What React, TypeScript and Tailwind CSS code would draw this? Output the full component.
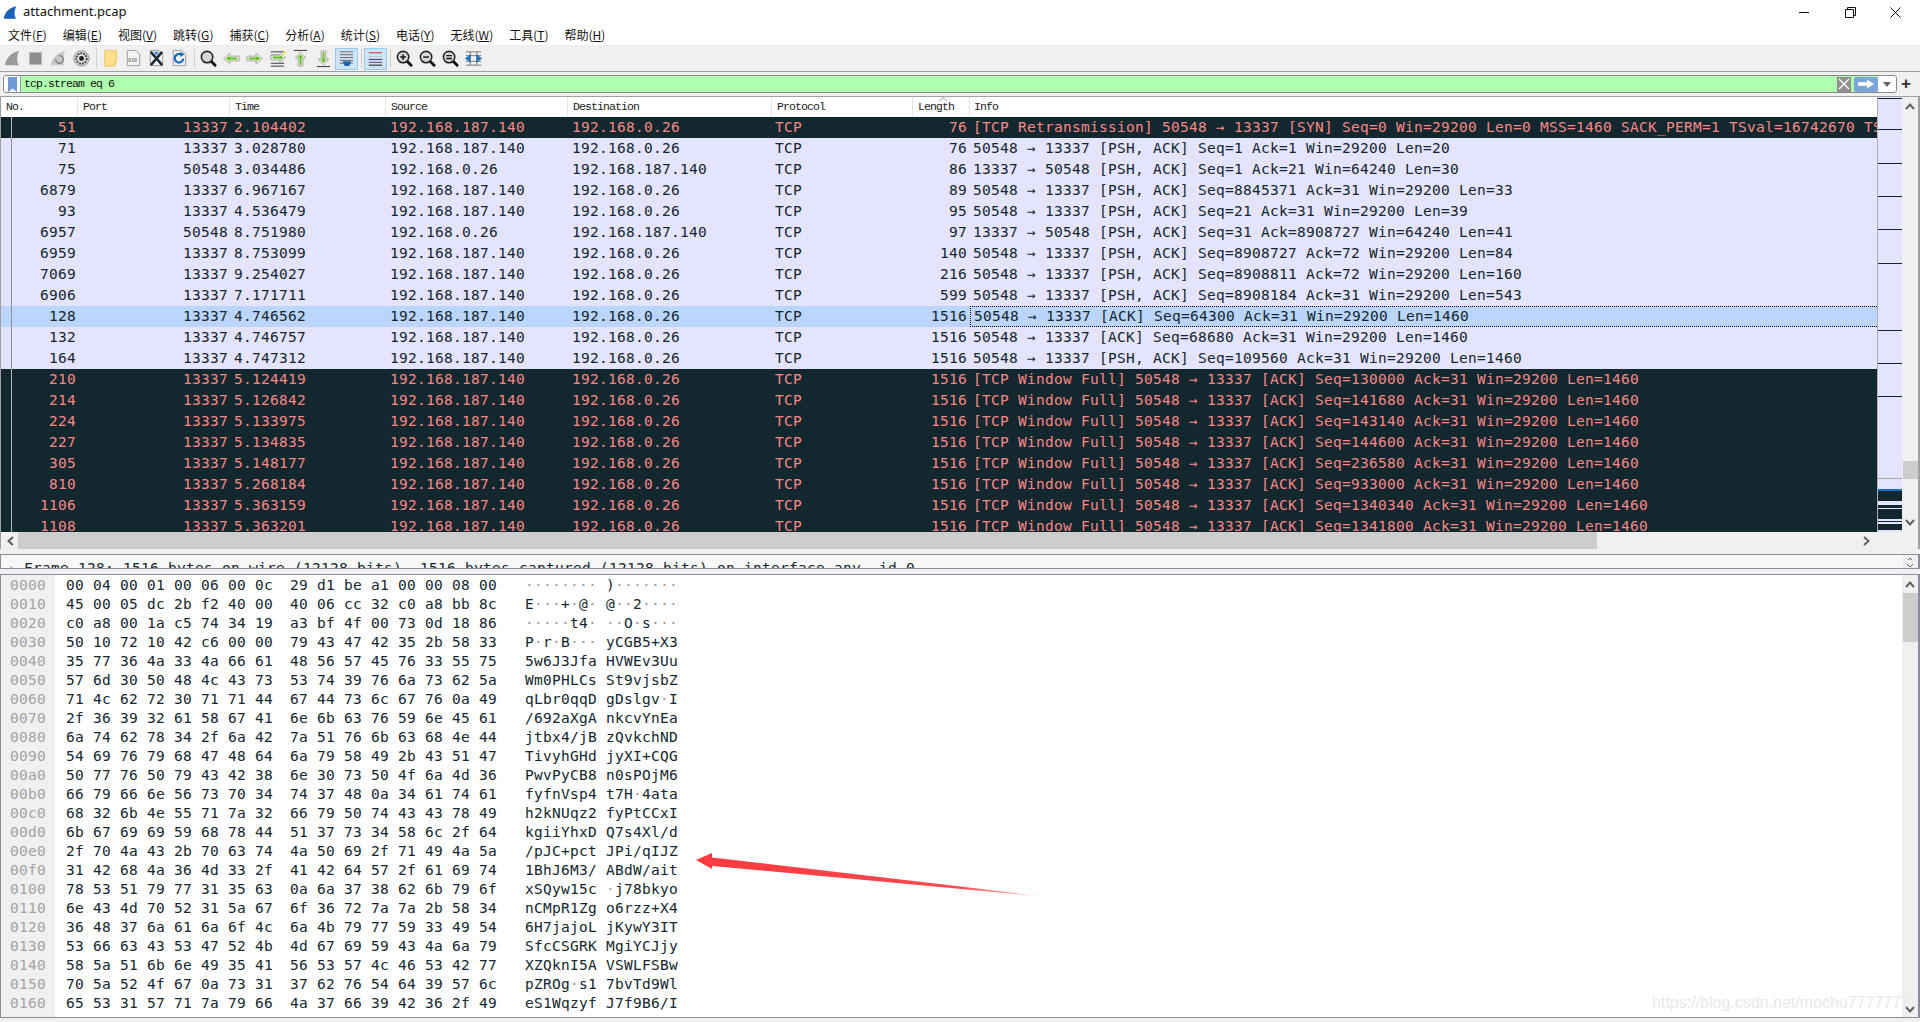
import React from 'react'

const mono = "font-['DejaVu_Sans_Mono','Liberation_Mono',monospace] text-[14.5px] tracking-[0.27px]"
const headFont = "font-['Liberation_Mono',monospace] text-[11.5px] tracking-[-0.9px]"

const menus = [
  ['文件', 'F'],
  ['编辑', 'E'],
  ['视图', 'V'],
  ['跳转', 'G'],
  ['捕获', 'C'],
  ['分析', 'A'],
  ['统计', 'S'],
  ['电话', 'Y'],
  ['无线', 'W'],
  ['工具', 'T'],
  ['帮助', 'H'],
]

type Pkt = { no: string; port: string; time: string; src: string; dst: string; len: string; info: string }

const HI = '192.168.187.140'
const LO = '192.168.0.26'

const pkt = (no: string, port: string, time: string, len: string, info: string): Pkt => ({
  no,
  port,
  time,
  src: port === '13337' ? HI : LO,
  dst: port === '13337' ? LO : HI,
  len,
  info,
})

const packets: Pkt[] = [
  pkt('51', '13337', '2.104402', '76', '[TCP Retransmission] 50548 → 13337 [SYN] Seq=0 Win=29200 Len=0 MSS=1460 SACK_PERM=1 TSval=16742670 TSecr=0 WS=128'),
  pkt('71', '13337', '3.028780', '76', '50548 → 13337 [PSH, ACK] Seq=1 Ack=1 Win=29200 Len=20'),
  pkt('75', '50548', '3.034486', '86', '13337 → 50548 [PSH, ACK] Seq=1 Ack=21 Win=64240 Len=30'),
  pkt('6879', '13337', '6.967167', '89', '50548 → 13337 [PSH, ACK] Seq=8845371 Ack=31 Win=29200 Len=33'),
  pkt('93', '13337', '4.536479', '95', '50548 → 13337 [PSH, ACK] Seq=21 Ack=31 Win=29200 Len=39'),
  pkt('6957', '50548', '8.751980', '97', '13337 → 50548 [PSH, ACK] Seq=31 Ack=8908727 Win=64240 Len=41'),
  pkt('6959', '13337', '8.753099', '140', '50548 → 13337 [PSH, ACK] Seq=8908727 Ack=72 Win=29200 Len=84'),
  pkt('7069', '13337', '9.254027', '216', '50548 → 13337 [PSH, ACK] Seq=8908811 Ack=72 Win=29200 Len=160'),
  pkt('6906', '13337', '7.171711', '599', '50548 → 13337 [PSH, ACK] Seq=8908184 Ack=31 Win=29200 Len=543'),
  pkt('128', '13337', '4.746562', '1516', '50548 → 13337 [ACK] Seq=64300 Ack=31 Win=29200 Len=1460'),
  pkt('132', '13337', '4.746757', '1516', '50548 → 13337 [ACK] Seq=68680 Ack=31 Win=29200 Len=1460'),
  pkt('164', '13337', '4.747312', '1516', '50548 → 13337 [PSH, ACK] Seq=109560 Ack=31 Win=29200 Len=1460'),
  pkt('210', '13337', '5.124419', '1516', '[TCP Window Full] 50548 → 13337 [ACK] Seq=130000 Ack=31 Win=29200 Len=1460'),
  pkt('214', '13337', '5.126842', '1516', '[TCP Window Full] 50548 → 13337 [ACK] Seq=141680 Ack=31 Win=29200 Len=1460'),
  pkt('224', '13337', '5.133975', '1516', '[TCP Window Full] 50548 → 13337 [ACK] Seq=143140 Ack=31 Win=29200 Len=1460'),
  pkt('227', '13337', '5.134835', '1516', '[TCP Window Full] 50548 → 13337 [ACK] Seq=144600 Ack=31 Win=29200 Len=1460'),
  pkt('305', '13337', '5.148177', '1516', '[TCP Window Full] 50548 → 13337 [ACK] Seq=236580 Ack=31 Win=29200 Len=1460'),
  pkt('810', '13337', '5.268184', '1516', '[TCP Window Full] 50548 → 13337 [ACK] Seq=933000 Ack=31 Win=29200 Len=1460'),
  pkt('1106', '13337', '5.363159', '1516', '[TCP Window Full] 50548 → 13337 [ACK] Seq=1340340 Ack=31 Win=29200 Len=1460'),
  pkt('1108', '13337', '5.363201', '1516', '[TCP Window Full] 50548 → 13337 [ACK] Seq=1341800 Ack=31 Win=29200 Len=1460'),
]

const hexLines = [
  '00 04 00 01 00 06 00 0c 29 d1 be a1 00 00 08 00',
  '45 00 05 dc 2b f2 40 00 40 06 cc 32 c0 a8 bb 8c',
  'c0 a8 00 1a c5 74 34 19 a3 bf 4f 00 73 0d 18 86',
  '50 10 72 10 42 c6 00 00 79 43 47 42 35 2b 58 33',
  '35 77 36 4a 33 4a 66 61 48 56 57 45 76 33 55 75',
  '57 6d 30 50 48 4c 43 73 53 74 39 76 6a 73 62 5a',
  '71 4c 62 72 30 71 71 44 67 44 73 6c 67 76 0a 49',
  '2f 36 39 32 61 58 67 41 6e 6b 63 76 59 6e 45 61',
  '6a 74 62 78 34 2f 6a 42 7a 51 76 6b 63 68 4e 44',
  '54 69 76 79 68 47 48 64 6a 79 58 49 2b 43 51 47',
  '50 77 76 50 79 43 42 38 6e 30 73 50 4f 6a 4d 36',
  '66 79 66 6e 56 73 70 34 74 37 48 0a 34 61 74 61',
  '68 32 6b 4e 55 71 7a 32 66 79 50 74 43 43 78 49',
  '6b 67 69 69 59 68 78 44 51 37 73 34 58 6c 2f 64',
  '2f 70 4a 43 2b 70 63 74 4a 50 69 2f 71 49 4a 5a',
  '31 42 68 4a 36 4d 33 2f 41 42 64 57 2f 61 69 74',
  '78 53 51 79 77 31 35 63 0a 6a 37 38 62 6b 79 6f',
  '6e 43 4d 70 52 31 5a 67 6f 36 72 7a 7a 2b 58 34',
  '36 48 37 6a 61 6a 6f 4c 6a 4b 79 77 59 33 49 54',
  '53 66 63 43 53 47 52 4b 4d 67 69 59 43 4a 6a 79',
  '58 5a 51 6b 6e 49 35 41 56 53 57 4c 46 53 42 77',
  '70 5a 52 4f 67 0a 73 31 37 62 76 54 64 39 57 6c',
  '65 53 31 57 71 7a 79 66 4a 37 66 39 42 36 2f 49',
]

const Fin = ({ fill }: { fill: string }) => (
  <path d="M2 17 C3.5 9 8 4 17 2 C14.5 7 14 12 16.5 17 Z" fill={fill} />
)

const Doc = ({ children }: { children?: React.ReactNode }) => (
  <>
    <path d="M3.5 1.5 H12.5 L16.5 5.5 V17.5 H3.5 Z" fill="#f4f4f4" stroke="#9a9a9a" />
    {children}
  </>
)

const Lens = ({ children }: { children?: React.ReactNode }) => (
  <>
    <path d="M12 12 L17 17" stroke="#111" strokeWidth="3" strokeLinecap="round" />
    <circle cx="8.5" cy="8.5" r="6" fill="#d8d8d8" stroke="#222" strokeWidth="1.6" />
    {children}
  </>
)

// pale outlined arrow with a green core, as in the Wireshark toolbar theme
const Arrow = ({ d, core }: { d: string; core: string }) => (
  <>
    <path d={d} fill="#f1f4e6" stroke="#a6a6a0" strokeWidth="1" />
    <path d={core} fill="#62bd1e" />
  </>
)

const rules = (ys: number[], color = '#333') => ys.map((y) => <path key={y} d={`M3 ${y} H17`} stroke={color} />)

const icons: React.ReactNode[] = [
  <Fin fill="#9a9a9a" />,
  <rect x="3.5" y="3.5" width="13" height="13" fill="#8d8d8d" stroke="#c4c4c4" />,
  <>
    <Fin fill="#c8c8c8" />
    <path d="M11 7 A4 4 0 1 1 7 11" fill="none" stroke="#777" strokeWidth="1.4" />
  </>,
  <>
    <circle cx="10" cy="10" r="8" fill="#e4e4e4" stroke="#8a8a8a" />
    <circle cx="10" cy="10" r="5.5" fill="none" stroke="#444" strokeWidth="2" strokeDasharray="2 1" />
    <circle cx="10" cy="10" r="2.6" fill="#222" />
  </>,
  <>
    <path d="M4 1.5 H16 V14 H14 V18 H4 Z" fill="#ffe08e" stroke="#eec35e" />
    <path d="M14 18 L16 14" stroke="#eec35e" />
  </>,
  <Doc>
    <text x="4.5" y="14" fontSize="5.5" fontFamily="Liberation Sans" fontWeight="700" fill="#777">010</text>
  </Doc>,
  <Doc>
    <path d="M4 3 L16 17 M16 3 L4 17" stroke="#1c2a33" strokeWidth="2.6" />
    <path d="M7 3 H13 L10 7 Z" fill="#4d8ed0" />
  </Doc>,
  <Doc>
    <path d="M14 10 A4.5 4.5 0 1 1 12 6" fill="none" stroke="#1f6fc2" strokeWidth="2.4" />
    <path d="M10.5 3 L15.5 5.5 L11 8.5 Z" fill="#1f6fc2" />
  </Doc>,
  <Lens />,
  <Arrow d="M1.5 10 L8.5 4.5 V7.5 H18 V12.5 H8.5 V15.5 Z" core="M4 10 L8 7 V9 H16 V11 H8 V13 Z" />,
  <Arrow d="M18.5 10 L11.5 4.5 V7.5 H2 V12.5 H11.5 V15.5 Z" core="M16 10 L12 7 V9 H4 V11 H12 V13 Z" />,
  <>
    {rules([3, 15, 18])}
    <path d="M3 6.5 H11" stroke="#333" />
    <Arrow d="M18.5 9 L12.5 4 V6.5 H3 V11.5 H12.5 V14 Z" core="M16 9 L13 6.5 V8 H5 V10 H13 V11.5 Z" />
    <rect x="16" y="3" width="3" height="3" fill="#ffe566" />
  </>,
  <>
    {rules([1.5])}
    <Arrow d="M10 3 L15.5 9.5 H12.5 V18 H7.5 V9.5 H4.5 Z" core="M10 5.5 L13 9 H11 V16.5 H9 V9 H7 Z" />
  </>,
  <>
    {rules([18.5])}
    <Arrow d="M10 17 L15.5 10.5 H12.5 V2 H7.5 V10.5 H4.5 Z" core="M10 14.5 L13 11 H11 V3.5 H9 V11 H7 Z" />
  </>,
  <>
    {rules([3, 6, 9, 12, 15], '#666')}
    <path d="M6 13 H15 L13 18 H8 Z" fill="#1f63a8" />
  </>,
  <>
    {rules([4], '#d42626')}
    {rules([8], '#c2c2c2')}
    {rules([11], '#2b2b7a')}
    {rules([14], '#7a2b5a')}
    {rules([17], '#111')}
  </>,
  <Lens>
    <path d="M5.5 8.5 H11.5 M8.5 5.5 V11.5" stroke="#111" strokeWidth="1.5" />
  </Lens>,
  <Lens>
    <path d="M5.5 8.5 H11.5" stroke="#111" strokeWidth="1.5" />
  </Lens>,
  <Lens>
    <path d="M5.5 7 H11.5 M5.5 10 H11.5" stroke="#111" strokeWidth="1.4" />
  </Lens>,
  <>
    <path d="M2 3 H18 M2 17 H18 M6.5 3 V17 M13.5 3 V17 M2 7 H18 M2 13 H18" stroke="#777" fill="none" />
    <path d="M1 10 L7 5.5 V14.5 Z M19 10 L13 5.5 V14.5 Z" fill="#2a70b8" />
  </>,
]

const toolGroups = [
  [0, 1, 2, 3],
  [4, 5, 6, 7],
  [8, 9, 10, 11, 12, 13, 14],
  [15],
  [16, 17, 18, 19],
]
const activeIcons = [14, 15]

const Chevron = ({ d }: { d: string }) => (
  <svg width="10" height="8" viewBox="0 0 10 8">
    <path d={d} fill="none" stroke="#606060" strokeWidth="2" />
  </svg>
)

const headerCell = 'flex h-full shrink-0 items-center border-r border-[#e4e4e4] pl-[5px]'
const cols = {
  no: 'w-[77px] shrink-0 pr-[2px] text-right',
  port: 'w-[152px] shrink-0 pr-[2px] text-right',
  time: 'w-[156px] shrink-0 pl-[4px]',
  src: 'w-[182px] shrink-0 pl-[4px]',
  dst: 'w-[204px] shrink-0 pl-[4px]',
  proto: 'w-[141px] shrink-0 pl-[3px]',
  len: 'w-[57px] shrink-0 pr-[3px] text-right',
}

const PacketRow = ({ p, index }: { p: Pkt; index: number }) => {
  const dark = index === 0 || index >= 12
  const selected = index === 9
  const tone = dark
    ? 'bg-[#12272e] text-[#f78787]'
    : selected
      ? 'bg-[#bbd5fd] text-[#12272e]'
      : 'bg-[#e4e4ff] text-[#12272e]'
  return (
    <div className={`flex h-[21px] items-center whitespace-nowrap leading-[21px] ${tone}`}>
      <div className={`relative h-full ${cols.no}`}>
        <span className={`absolute left-[10px] top-0 h-full w-px ${dark ? 'bg-[#b8bcc0]' : 'bg-[#8e8e9e]'}`} />
        {p.no}
      </div>
      <div className={cols.port}>{p.port}</div>
      <div className={cols.time}>{p.time}</div>
      <div className={cols.src}>{p.src}</div>
      <div className={cols.dst}>{p.dst}</div>
      <div className={cols.proto}>TCP</div>
      <div className={cols.len}>{p.len}</div>
      <div
        className={`h-full min-w-0 flex-1 overflow-hidden pl-[3px] ${
          selected ? 'border-y border-l border-dotted border-black leading-[19px]' : ''
        }`}
      >
        {p.info}
      </div>
    </div>
  )
}

const AsciiCell = ({ bytes }: { bytes: string[] }) => (
  <span>
    {bytes.map((b, i) => {
      const code = parseInt(b, 16)
      const printable = code >= 0x20 && code < 0x7f
      return (
        <span key={i} className={printable ? 'text-[#12272e]' : 'text-[#9a9a9a]'}>
          {printable ? String.fromCharCode(code) : '·'}
        </span>
      )
    })}
  </span>
)

const HexRow = ({ line, index }: { line: string; index: number }) => {
  const bytes = line.split(' ')
  const offset = (index * 16).toString(16).padStart(4, '0')
  return (
    <div className="flex h-[19px] items-center whitespace-pre leading-[19px]">
      <div className="w-[54px] shrink-0 pl-[9px] text-[#a3a3a3]">{offset}</div>
      <div className="w-[226px] shrink-0 pl-[11px] text-[#12272e]">{bytes.slice(0, 8).join(' ')}</div>
      <div className="w-[235px] shrink-0 pl-[9px] text-[#12272e]">{bytes.slice(8).join(' ')}</div>
      <div className="w-[90px] shrink-0 pl-[9px]">
        <AsciiCell bytes={bytes.slice(0, 8)} />
      </div>
      <div>
        <AsciiCell bytes={bytes.slice(8)} />
      </div>
    </div>
  )
}

const Minimap = () => (
  <svg width="24" height="435" viewBox="0 0 24 435" className="block">
    <rect width="24" height="435" fill="#e4e4ff" />
    {[1, 32, 66, 99, 132, 166, 233, 266, 299].map((y) => (
      <rect key={y} y={y} width="24" height="1" fill="#12272e" />
    ))}
    <rect y="381" width="24" height="1" fill="#a8a8a8" />
    <rect y="392" width="24" height="2" fill="#1570c8" />
    <rect y="394" width="24" height="10" fill="#12272e" />
    <rect y="408" width="24" height="3" fill="#12272e" />
    <rect y="412" width="24" height="10" fill="#12272e" />
    <rect y="424" width="24" height="1" fill="#12272e" />
    <rect y="427" width="24" height="6" fill="#12272e" />
  </svg>
)

export default function App() {
  return (
    <div className="relative flex h-[1022px] w-[1920px] flex-col overflow-hidden bg-[#f0f0f0] font-['Noto_Sans','Noto_Sans_CJK_SC',sans-serif]">
      {/* title bar */}
      <div className="flex h-6 shrink-0 items-center bg-white pl-[2px]">
        <svg width="16" height="17" viewBox="0 0 19 19">
          <Fin fill="#1a62b8" />
        </svg>
        <span className="ml-[5px] text-[13px] text-[#111]">attachment.pcap</span>
        <div className="ml-auto flex items-center">
          <svg width="103" height="20" viewBox="0 0 103 20" className="mr-[18px]">
            <path d="M0 10.5 H10" stroke="#111" />
            <path d="M46.5 7.5 H54.5 V15.5 H46.5 Z M48.5 7 V5.5 H56.5 V13.5 H55" fill="none" stroke="#111" />
            <path d="M91.5 5.5 L101.5 15.5 M101.5 5.5 L91.5 15.5" stroke="#111" />
          </svg>
        </div>
      </div>

      {/* menu */}
      <div className="flex h-[22px] shrink-0 items-center border-b border-[#ececec] bg-white pl-0 font-['Noto_Sans_CJK_SC','Noto_Sans',sans-serif] text-[12px] text-[#111]">
        {menus.map(([label, key]) => (
          <span key={key} className="px-2">
            {label}(<span className="underline">{key}</span>)
          </span>
        ))}
      </div>

      {/* toolbar */}
      <div className="flex h-[26px] shrink-0 items-center border-b border-[#a0a0a0] bg-[#f0f0f0] pl-px">
        {toolGroups.map((group, g) => (
          <React.Fragment key={g}>
            {g > 0 && (
              <div className="flex w-[6px] justify-center">
                <div className="h-[19px] w-px bg-[#d0d0d0]" />
              </div>
            )}
            {group.map((i) => (
              <div
                key={i}
                className={`flex h-[22px] w-[23px] items-center justify-center ${
                  activeIcons.includes(i) ? 'border border-[#99c9ef] bg-[#cde4f7]' : ''
                }`}
              >
                <svg width="19" height="19" viewBox="0 0 20 20">
                  {icons[i]}
                </svg>
              </div>
            ))}
          </React.Fragment>
        ))}
      </div>

      {/* display filter */}
      <div className="flex h-6 shrink-0 items-start bg-[#f0f0f0] pl-[3px] pt-[3px]">
        <div className="flex h-[18px] w-[1894px] items-stretch overflow-hidden rounded-[3px] border border-[#8a8a8a] bg-[#afffaf]">
          <div className="flex w-[17px] shrink-0 items-center justify-center border-r border-[#9a9a9a] bg-white">
            <svg width="9" height="15" viewBox="0 0 9 15">
              <path d="M0 0 H9 V15 L4.5 11.5 L0 15 Z" fill="#6f9bd8" />
            </svg>
          </div>
          <span className={`${headFont} ml-[3px] self-center text-[#111]`}>tcp.stream eq 6</span>
          <div className="ml-auto flex shrink-0 items-center bg-[#afffaf]">
            <div className="flex h-[15px] w-[14px] items-center justify-center bg-[#8f8f8f]">
              <svg width="12" height="12" viewBox="0 0 12 12">
                <path d="M1 1 L11 11 M11 1 L1 11" stroke="#fff" strokeWidth="1.4" />
              </svg>
            </div>
            <div className="ml-[3px] flex h-[15px] w-[24px] items-center justify-center rounded-[2px] bg-[#7ba4d9]">
              <svg width="18" height="10" viewBox="0 0 18 10">
                <path d="M1 3.2 H10 V0.5 L17 5 L10 9.5 V6.8 H1 Z" fill="#fff" />
              </svg>
            </div>
          </div>
          <div className="flex w-[18px] shrink-0 items-center justify-center bg-white">
            <svg width="8" height="5" viewBox="0 0 8 5">
              <path d="M0 0 H8 L4 5 Z" fill="#666" />
            </svg>
          </div>
        </div>
        <span className="ml-[4px] font-['Liberation_Sans',sans-serif] text-[17px] font-bold leading-[17px] text-[#333]">+</span>
      </div>

      {/* packet list */}
      <div className="flex h-[453px] shrink-0 flex-col border-l border-r-2 border-t border-[#a0a0a0]">
        <div className="flex h-[435px] shrink-0">
          <div className={`${mono} w-[1876px] shrink-0 overflow-hidden`}>
            <div className={`${headFont} relative flex h-5 items-center bg-white text-[#222]`}>
              <div className={`${headerCell} w-[77px]`}>No.</div>
              <div className={`${headerCell} w-[152px]`}>Port</div>
              <div className={`${headerCell} w-[156px]`}>Time</div>
              <div className={`${headerCell} w-[182px]`}>Source</div>
              <div className={`${headerCell} w-[204px]`}>Destination</div>
              <div className={`${headerCell} w-[141px]`}>Protocol</div>
              <div className={`${headerCell} w-[57px]`}>Length</div>
              <div className="pl-[4px]">Info</div>
              <svg width="10" height="4" viewBox="0 0 10 4" className="absolute left-[937px] top-0">
                <path d="M1 4 L5 0.5 L9 4" fill="none" stroke="#999" />
              </svg>
            </div>
            {packets.map((p, i) => (
              <PacketRow key={p.no} p={p} index={i} />
            ))}
          </div>
          <div className="w-[25px] shrink-0 border-x border-[#b0b0b0]">
            <Minimap />
          </div>
          <div className="flex w-[16px] shrink-0 flex-col items-center bg-[#f0f0f0] pt-[5px]">
            <Chevron d="M1 7 L5 2.5 L9 7" />
            <div className="mt-[351px] h-[18px] w-[15px] bg-[#cdcdcd]" />
            <div className="mt-auto mb-[5px]">
              <Chevron d="M1 1 L5 5.5 L9 1" />
            </div>
          </div>
        </div>
        <div className="flex h-[17px] shrink-0 items-center bg-[#f0f0f0]">
          <div className="flex w-[17px] justify-center">
            <svg width="8" height="10" viewBox="0 0 8 10">
              <path d="M7 1 L2.5 5 L7 9" fill="none" stroke="#606060" strokeWidth="2" />
            </svg>
          </div>
          <div className="h-full w-[1579px] bg-[#cdcdcd]" />
          <div className="ml-[266px]">
            <svg width="8" height="10" viewBox="0 0 8 10">
              <path d="M1 1 L5.5 5 L1 9" fill="none" stroke="#606060" strokeWidth="2" />
            </svg>
          </div>
        </div>
      </div>

      {/* packet details, squeezed to one sliver */}
      <div className="mt-[5px] flex h-[15px] shrink-0 overflow-hidden border-y border-l border-r-2 border-[#8c8c9a] bg-[#f8f8f8]">
        <div className={`${mono} flex min-w-0 flex-1 whitespace-pre pt-[4px] leading-[19px] text-[#12272e]`}>
          <span className="w-[23px] shrink-0 pl-[6px] text-[#a0a0a0]">›</span>
          <span>Frame 128: 1516 bytes on wire (12128 bits), 1516 bytes captured (12128 bits) on interface any, id 0</span>
        </div>
        <div className="flex w-[16px] shrink-0 flex-col items-center justify-between bg-[#f0f0f0] pb-[1px] pt-[2px]">
          <svg width="6" height="3" viewBox="0 0 6 3">
            <path d="M1 3 L3 1 L5 3" fill="none" stroke="#606060" />
          </svg>
          <svg width="8" height="3" viewBox="0 0 8 3">
            <path d="M1 0 L4 3 L7 0" fill="none" stroke="#606060" />
          </svg>
        </div>
      </div>

      {/* packet bytes */}
      <div className="mt-[5px] flex h-[444px] shrink-0 border-y border-l border-r-2 border-[#8c8c9a] bg-white">
        <div className={`${mono} relative min-w-0 flex-1 overflow-hidden pt-px`}>
          <div className="absolute inset-y-0 left-0 w-[54px] bg-[#f0f0f0]" />
          <div className="relative">
            {hexLines.map((line, i) => (
              <HexRow key={i} line={line} index={i} />
            ))}
          </div>
        </div>
        <div className="flex w-[16px] shrink-0 flex-col items-center bg-[#f0f0f0] pt-[5px]">
          <Chevron d="M1 7 L5 2.5 L9 7" />
          <div className="mt-[5px] h-[49px] w-[15px] bg-[#cdcdcd]" />
          <div className="mt-auto mb-[3px]">
            <Chevron d="M1 1 L5 5.5 L9 1" />
          </div>
        </div>
      </div>

      {/* screenshot annotations */}
      <svg width="1920" height="1022" viewBox="0 0 1920 1022" className="pointer-events-none absolute left-0 top-0">
        <defs>
          <linearGradient id="tail" x1="696" y1="860" x2="1049" y2="897" gradientUnits="userSpaceOnUse">
            <stop offset="0" stopColor="#fb3a3f" />
            <stop offset="0.75" stopColor="#fb4a4f" />
            <stop offset="1" stopColor="#fff0f0" />
          </linearGradient>
        </defs>
        <path d="M696 860 L712 853 L712 857.5 L1049 897 L712 866 L712 869 Z" fill="url(#tail)" />
      </svg>
      <span className="absolute right-[10px] top-[991px] font-['Liberation_Sans',sans-serif] text-[16px] leading-6 text-[#e9e9e9]">
        https://blog.csdn.net/mochu7777777
      </span>
    </div>
  )
}
